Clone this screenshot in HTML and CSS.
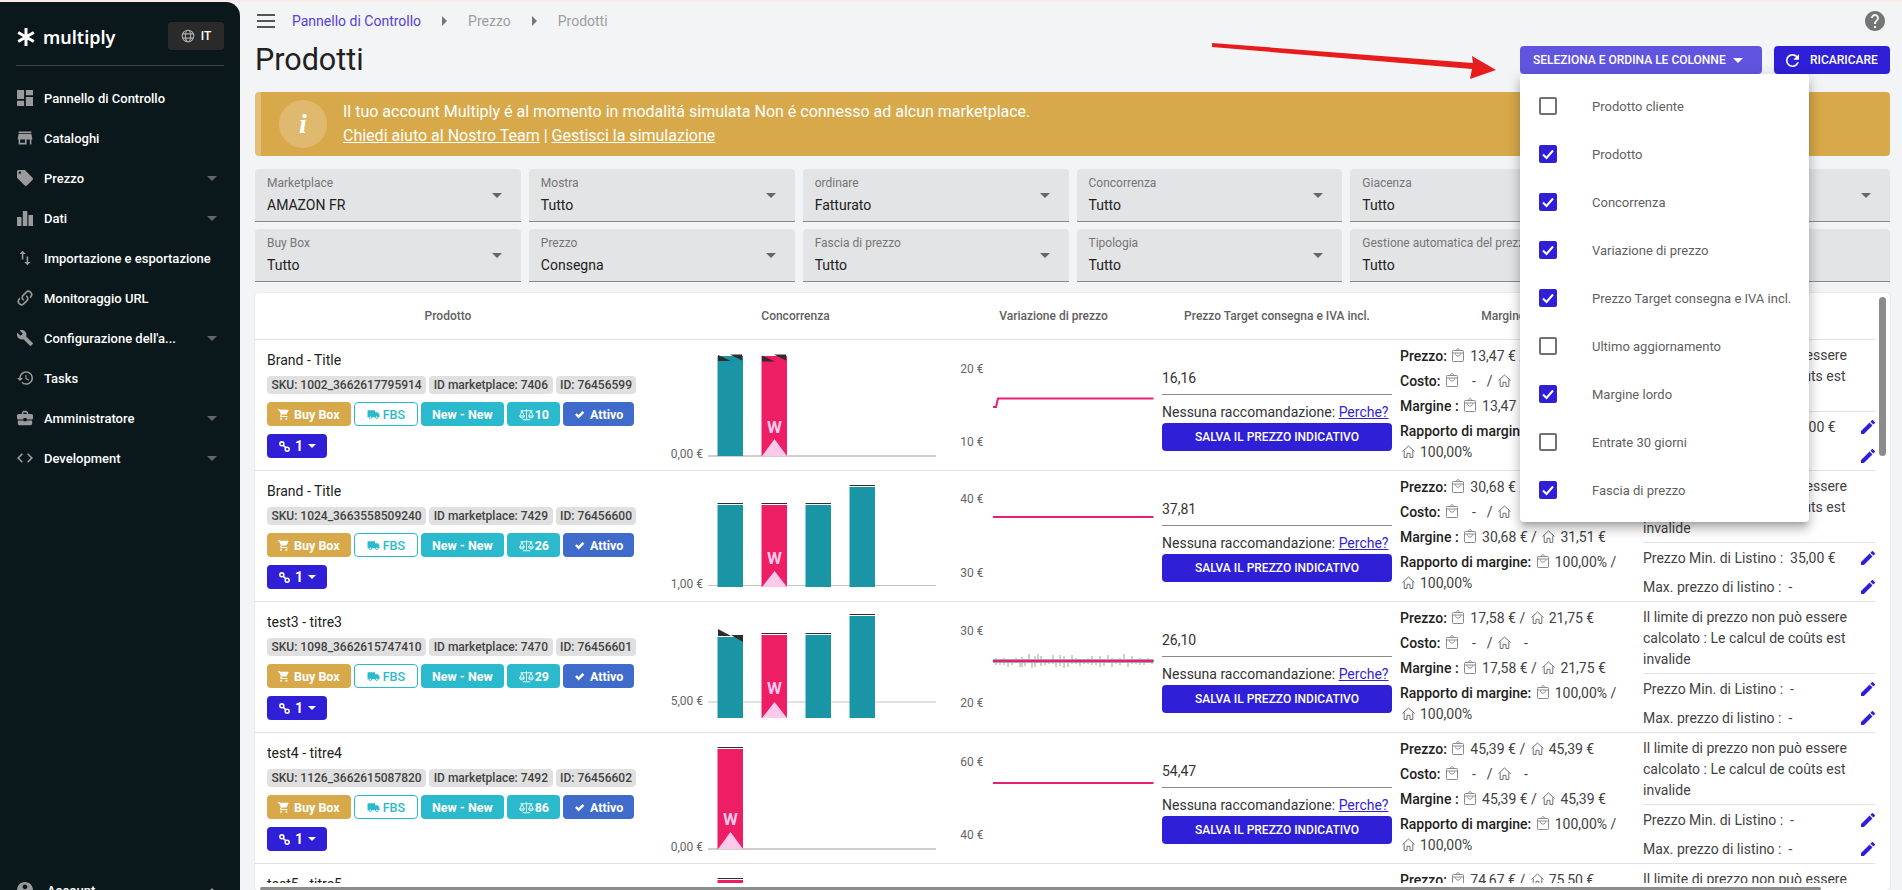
FILE: index.html
```html
<!DOCTYPE html>
<html lang="it">
<head>
<meta charset="utf-8">
<title>Prodotti</title>
<link rel="stylesheet" href="styles.css">
</head>
<body>
<svg class="sprite" xmlns="http://www.w3.org/2000/svg">
  <symbol id="i-dash" viewBox="3 3 18 18"><path d="M3 13h8V3H3v10zm0 8h8v-6H3v6zm10 0h8V11h-8v10zm0-18v6h8V3h-8z"/></symbol>
  <symbol id="i-store" viewBox="2 2 20 20"><path d="M20 4H4v2h16V4zm1 10v-2l-1-5H4l-1 5v2h1v6h10v-6h4v6h2v-6h1zm-9 4H6v-4h6v4z"/></symbol>
  <symbol id="i-tag" viewBox="2 2 20 20"><path d="M21.41 11.58l-9-9C12.05 2.22 11.55 2 11 2H4c-1.1 0-2 .9-2 2v7c0 .55.22 1.05.59 1.42l9 9c.36.36.86.58 1.41.58.55 0 1.05-.22 1.41-.59l7-7c.37-.36.59-.86.59-1.41 0-.55-.23-1.06-.59-1.42zM5.5 7C4.67 7 4 6.33 4 5.5S4.67 4 5.5 4 7 4.67 7 5.500 6.33 7 5.500 7z"/></symbol>
  <symbol id="i-bars" viewBox="0 0 16 16"><path d="M0 7h4.500v9H0zM5.800 1h4.500v15H5.800zM11.500 5H16v11h-4.500z"/></symbol>
  <symbol id="i-swap" viewBox="3 2 18 20"><path d="M9 3L5 6.990h3V14h2V6.990h3L9 3zm7 14.010V10h-2v7.010h-3L15 21l4-3.990h-3z"/></symbol>
  <symbol id="i-link" viewBox="2 2 20 20"><path d="M10.59 13.41c.41.39.41 1.03 0 1.42-.39.39-1.03.39-1.42 0a5.003 5.003 0 0 1 0-7.07l3.54-3.54a5.003 5.003 0 0 1 7.07 0 5.003 5.003 0 0 1 0 7.07l-1.49 1.49c.01-.82-.12-1.64-.4-2.42l.47-.48a2.982 2.982 0 0 0 0-4.24 2.982 2.982 0 0 0-4.24 0l-3.53 3.53a2.982 2.982 0 0 0 0 4.24zm2.82-4.24c.39-.39 1.03-.39 1.42 0a5.003 5.003 0 0 1 0 7.07l-3.54 3.54a5.003 5.003 0 0 1-7.07 0 5.003 5.003 0 0 1 0-7.07l1.49-1.49c-.01.82.12 1.64.4 2.43l-.47.47a2.982 2.982 0 0 0 0 4.24 2.982 2.982 0 0 0 4.24 0l3.53-3.53a2.982 2.982 0 0 0 0-4.24.973.973 0 0 1 0-1.42z"/></symbol>
  <symbol id="i-wrench" viewBox="1 1 22 22"><path d="M22.7 19l-9.1-9.1c.9-2.3.4-5-1.5-6.9-2-2-5-2.4-7.4-1.3L9 6 6 9 1.6 4.7C.4 7.1.9 10.1 2.9 12.1c1.9 1.9 4.6 2.4 6.9 1.5l9.1 9.1c.4.4 1 .4 1.4 0l2.3-2.3c.5-.4.5-1.1.1-1.4z"/></symbol>
  <symbol id="i-history" viewBox="1 2 21 20"><path d="M13 3c-4.97 0-9 4.03-9 9H1l3.89 3.89.07.14L9 12H6c0-3.87 3.13-7 7-7s7 3.13 7 7-3.13 7-7 7c-1.93 0-3.68-.79-4.94-2.06l-1.42 1.42C8.27 19.99 10.51 21 13 21c4.97 0 9-4.03 9-9s-4.03-9-9-9zm-1 5v5l4.28 2.54.72-1.21-3.5-2.08V8H12z"/></symbol>
  <symbol id="i-case" viewBox="2 2 20 20"><path d="M10 16v-1H3.01L3 19c0 1.11.89 2 2 2h14c1.11 0 2-.89 2-2v-4h-7v1h-4zm10-9h-4.01V5l-2-2h-4l-2 2v2H4c-1.1 0-2 .9-2 2v3c0 1.11.89 2 2 2h6v-2h4v2h6c1.1 0 2-.9 2-2V9c0-1.1-.9-2-2-2zm-6 0h-4V5h4v2z"/></symbol>
  <symbol id="i-code" viewBox="2 2 20 20"><path d="M9.4 16.6L4.8 12l4.6-4.6L8 6l-6 6 6 6 1.4-1.4zm5.2 0l4.6-4.6-4.6-4.6L16 6l6 6-6 6-1.4-1.4z"/></symbol>
  <symbol id="i-user" viewBox="2 2 20 20"><path d="M12 2C6.48 2 2 6.48 2 12s4.48 10 10 10 10-4.48 10-10S17.52 2 12 2zm0 3c1.66 0 3 1.34 3 3s-1.34 3-3 3-3-1.34-3-3 1.34-3 3-3zm0 14.2c-2.5 0-4.71-1.28-6-3.22.03-1.99 4-3.08 6-3.08 1.99 0 5.97 1.09 6 3.08-1.29 1.94-3.5 3.22-6 3.22z"/></symbol>
  <symbol id="i-help" viewBox="2 2 20 20"><path d="M12 2C6.48 2 2 6.48 2 12s4.48 10 10 10 10-4.48 10-10S17.52 2 12 2zm1 17h-2v-2h2v2zm2.07-7.75l-.9.92C13.45 12.9 13 13.5 13 15h-2v-.5c0-1.1.45-2.1 1.17-2.83l1.24-1.26c.37-.36.59-.86.59-1.41 0-1.1-.9-2-2-2s-2 .9-2 2H8c0-2.21 1.79-4 4-4s4 1.79 4 4c0 .88-.36 1.68-.93 2.25z"/></symbol>
  <symbol id="i-refresh" viewBox="4 4 16 16"><path d="M17.65 6.35C16.2 4.9 14.21 4 12 4c-4.42 0-7.99 3.58-7.99 8s3.57 8 7.99 8c3.73 0 6.84-2.55 7.73-6h-2.08c-.82 2.33-3.04 4-5.65 4-3.31 0-6-2.69-6-6s2.69-6 6-6c1.66 0 3.14.69 4.22 1.78L13 11h7V4l-2.35 2.35z"/></symbol>
  <symbol id="i-edit" viewBox="3 3 18 18"><path d="M3 17.25V21h3.75L17.81 9.94l-3.75-3.75L3 17.25zM20.71 7.04c.39-.39.39-1.02 0-1.41l-2.34-2.34c-.39-.39-1.02-.39-1.41 0l-1.83 1.83 3.75 3.75 1.83-1.83z"/></symbol>
  <symbol id="i-globe" viewBox="0 0 16 16"><g fill="none" stroke="currentColor" stroke-width="1.3"><circle cx="8" cy="8" r="6.6"/><ellipse cx="8" cy="8" rx="3" ry="6.6"/><path d="M1.6 5.6h12.8M1.6 10.4h12.8"/></g></symbol>
  <symbol id="i-cart" viewBox="1 2 21 20"><path d="M7 18c-1.1 0-1.99.9-1.99 2S5.9 22 7 22s2-.9 2-2-.9-2-2-2zM1 2v2h2l3.6 7.59-1.35 2.45c-.16.28-.25.61-.25.96 0 1.1.9 2 2 2h12v-2H7.42l.9-3h7.45c.75 0 1.41-.41 1.75-1.03l3.58-6.49c.08-.14.12-.31.12-.48 0-.55-.45-1-1-1H5.21l-.94-2H1zM17 18c-1.1 0-1.99.9-1.99 2s.89 2 1.99 2 2-.9 2-2-.9-2-2-2z"/></symbol>
  <symbol id="i-truck" viewBox="0 3 24 18"><path d="M9 4h13a1 1 0 0 1 1 1v12h-2a3 3 0 0 1-6 0H9a3 3 0 0 1-6 0H1v-5l3-4h5zM6 15.5a1.5 1.5 0 1 0 0 3 1.5 1.5 0 0 0 0-3zm12 0a1.5 1.5 0 1 0 0 3 1.5 1.5 0 0 0 0-3z"/></symbol>
  <symbol id="i-scale" viewBox="0 0 20 16"><g fill="none" stroke="currentColor" stroke-width="1.2"><path d="M10 1v13M2 3h16M5 15h10"/><path d="M4 3.5 1 10h6zM16 3.5 13 10h6z"/><path d="M1 10a3 2.6 0 0 0 6 0M13 10a3 2.6 0 0 0 6 0"/></g></symbol>
  <symbol id="i-check" viewBox="0 0 16 16"><path d="M1.5 8.5 4 6l2.7 2.7L12.3 3 15 5.6l-8.300 8.200z"/></symbol>
  <symbol id="i-tick" viewBox="0 0 14 14"><path d="M2 7.500 5.500 11 12 3.500" fill="none" stroke="#fff" stroke-width="2"/></symbol>
  <symbol id="i-chain" viewBox="0 0 14 14"><g fill="none" stroke="currentColor" stroke-width="2"><circle cx="3.600" cy="3.600" r="2.500"/><circle cx="10.400" cy="10.400" r="2.500"/><path d="M5.500 5.500l3 3"/></g></symbol>
  <symbol id="i-bag" viewBox="0 0 12 14"><g fill="none" stroke="currentColor" stroke-width="1"><rect x=".5" y="2.500" width="11" height="11" rx=".8"/><path d="M.5 5h11M3.500 5.500c0 3.500 5 3.500 5 0M4.500 2.500c0-2.500 3-2.500 3 0"/></g></symbol>
  <symbol id="i-home" viewBox="0 0 13 13"><g fill="none" stroke="currentColor" stroke-width="1"><path d="M.5 6.500 6.500 1l6 5.500"/><path d="M2.200 5.500v7h2.800V8.300h3v4.200h2.800v-7"/></g></symbol>
</svg>

<div class="app">
  <aside class="sidebar">
    <div class="brand">
      <svg class="brand-star" viewBox="0 0 18 18"><path d="M9 0v18M1.200 4.500l15.600 9M1.200 13.500l15.600-9"/></svg>
      <span class="brand-name">multiply</span>
      <span class="lang"><svg class="ic-globe"><use href="#i-globe"/></svg>IT</span>
    </div>
    <nav class="nav">
      <a class="nav-item"><svg class="nav-ic"><use href="#i-dash"/></svg><span>Pannello di Controllo</span></a>
      <a class="nav-item"><svg class="nav-ic"><use href="#i-store"/></svg><span>Cataloghi</span></a>
      <a class="nav-item"><svg class="nav-ic"><use href="#i-tag"/></svg><span>Prezzo</span><i class="caret nav-caret"></i></a>
      <a class="nav-item"><svg class="nav-ic"><use href="#i-bars"/></svg><span>Dati</span><i class="caret nav-caret"></i></a>
      <a class="nav-item"><svg class="nav-ic"><use href="#i-swap"/></svg><span>Importazione e esportazione</span></a>
      <a class="nav-item"><svg class="nav-ic"><use href="#i-link"/></svg><span>Monitoraggio URL</span></a>
      <a class="nav-item"><svg class="nav-ic"><use href="#i-wrench"/></svg><span>Configurazione dell'a...</span><i class="caret nav-caret"></i></a>
      <a class="nav-item"><svg class="nav-ic"><use href="#i-history"/></svg><span>Tasks</span></a>
      <a class="nav-item"><svg class="nav-ic"><use href="#i-case"/></svg><span>Amministratore</span><i class="caret nav-caret"></i></a>
      <a class="nav-item"><svg class="nav-ic"><use href="#i-code"/></svg><span>Development</span><i class="caret nav-caret"></i></a>
    </nav>
    <a class="nav-item account"><svg class="nav-ic"><use href="#i-user"/></svg><span>Account</span><i class="caret caret-up nav-caret"></i></a>
  </aside>

  <main class="main">
    <header class="topbar">
      <span class="burger"><i></i><i></i><i></i></span>
      <a class="crumb crumb-link">Pannello di Controllo</a>
      <i class="crumb-sep"></i>
      <span class="crumb">Prezzo</span>
      <i class="crumb-sep"></i>
      <span class="crumb">Prodotti</span>
      <svg class="help"><use href="#i-help"/></svg>
    </header>

    <div class="titlebar">
      <h1 class="title">Prodotti</h1>
      <div class="actions">
        <div class="menu-anchor">
          <button class="btn btn-light">SELEZIONA E ORDINA LE COLONNE<i class="caret caret-white"></i></button>
          <ul class="menu">
            <li class="menu-item"><i class="cb"></i>Prodotto cliente</li>
            <li class="menu-item"><i class="cb cb-on"><svg><use href="#i-tick"/></svg></i>Prodotto</li>
            <li class="menu-item"><i class="cb cb-on"><svg><use href="#i-tick"/></svg></i>Concorrenza</li>
            <li class="menu-item"><i class="cb cb-on"><svg><use href="#i-tick"/></svg></i>Variazione di prezzo</li>
            <li class="menu-item"><i class="cb cb-on"><svg><use href="#i-tick"/></svg></i>Prezzo Target consegna e IVA incl.</li>
            <li class="menu-item"><i class="cb"></i>Ultimo aggiornamento</li>
            <li class="menu-item"><i class="cb cb-on"><svg><use href="#i-tick"/></svg></i>Margine lordo</li>
            <li class="menu-item"><i class="cb"></i>Entrate 30 giorni</li>
            <li class="menu-item"><i class="cb cb-on"><svg><use href="#i-tick"/></svg></i>Fascia di prezzo</li>
          </ul>
        </div>
        <button class="btn btn-dark"><svg class="ic-refresh"><use href="#i-refresh"/></svg>RICARICARE</button>
      </div>
      <svg class="red-arrow" viewBox="0 0 300 40"><path d="M0 2 261 22 260 15 284 29 258 38 260 28 0 6z"/></svg>
    </div>

    <section class="banner">
      <span class="banner-circle">i</span>
      <div class="banner-text">
        <div>Il tuo account Multiply é al momento in modalitá simulata Non é connesso ad alcun marketplace.</div>
        <div><a class="banner-link">Chiedi aiuto al Nostro Team</a> | <a class="banner-link">Gestisci la simulazione</a></div>
      </div>
    </section>

    <section class="filters">
      <div class="filter"><label>Marketplace</label><span>AMAZON FR</span><i class="caret filter-caret"></i></div>
      <div class="filter"><label>Mostra</label><span>Tutto</span><i class="caret filter-caret"></i></div>
      <div class="filter"><label>ordinare</label><span>Fatturato</span><i class="caret filter-caret"></i></div>
      <div class="filter"><label>Concorrenza</label><span>Tutto</span><i class="caret filter-caret"></i></div>
      <div class="filter"><label>Giacenza</label><span>Tutto</span><i class="caret filter-caret"></i></div>
      <div class="filter"><i class="caret filter-caret"></i></div>
      <div class="filter"><label>Buy Box</label><span>Tutto</span><i class="caret filter-caret"></i></div>
      <div class="filter"><label>Prezzo</label><span>Consegna</span><i class="caret filter-caret"></i></div>
      <div class="filter"><label>Fascia di prezzo</label><span>Tutto</span><i class="caret filter-caret"></i></div>
      <div class="filter"><label>Tipologia</label><span>Tutto</span><i class="caret filter-caret"></i></div>
      <div class="filter"><label>Gestione automatica del prezzo</label><span>Tutto</span><i class="caret filter-caret"></i></div>
      <div class="filter"></div>
    </section>

    <section class="card">
      <div class="table">
        <div class="row head">
          <div>Prodotto</div><div>Concorrenza</div><div>Variazione di prezzo</div><div>Prezzo Target consegna e IVA incl.</div><div>Margine lordo</div><div></div>
        </div>

        <!-- riga 1 -->
        <div class="row">
          <div class="c-product">
            <div class="p-title">Brand - Title</div>
            <div class="tags"><span class="tag">SKU: 1002_3662617795914</span><span class="tag">ID marketplace: 7406</span><span class="tag">ID: 76456599</span></div>
            <div class="badges">
              <span class="badge b-gold"><svg><use href="#i-cart"/></svg>Buy Box</span>
              <span class="badge b-line"><svg><use href="#i-truck"/></svg>FBS</span>
              <span class="badge b-teal">New - New</span>
              <span class="badge b-teal b-scale"><svg><use href="#i-scale"/></svg>10</span>
              <span class="badge b-blue"><svg><use href="#i-check"/></svg>Attivo</span>
            </div>
            <span class="badge b-ink"><svg><use href="#i-chain"/></svg>1<i class="caret caret-white caret-small"></i></span>
          </div>
          <svg class="chart" viewBox="0 0 309 130">
            <text class="axis-t" x="62" y="118">0,00 €</text>
            <rect class="axis" x="67" y="115" width="228" height="2"/>
            <rect class="teal" x="76.500" y="16" width="25.500" height="100"/>
            <path class="dark" d="M77 15v6h13zM89 14.500h12v6z"/>
            <rect class="pink" x="120.500" y="16" width="25.500" height="100"/>
            <path class="dark" d="M121 15.500v6h13zM133 14.500h12v6z"/>
            <text class="w" x="133.500" y="93">W</text>
            <path class="tri" d="M133.500 99 121 116h25z"/>
          </svg>
          <svg class="spark" viewBox="0 0 207 130">
            <text class="axis-t" x="33.500" y="33">20 €</text>
            <text class="axis-t" x="33.500" y="106">10 €</text>
            <path class="line" d="M43 67h3l2-8.500h155.500"/>
          </svg>
          <div class="c-target">
            <div class="t-value">16,16</div>
            <div class="t-note">Nessuna raccomandazione: <a class="perche">Perche?</a></div>
            <button class="save">SALVA IL PREZZO INDICATIVO</button>
          </div>
          <div class="c-margin">
            <div class="m"><b>Prezzo:</b> <span class="v"><svg class="bag"><use href="#i-bag"/></svg>13,47 € /</span> <span class="v"><svg class="home"><use href="#i-home"/></svg>13,47 €</span></div>
            <div class="m"><b>Costo:</b> <span class="v"><svg class="bag"><use href="#i-bag"/></svg><span class="dash">-</span>/</span> <span class="v"><svg class="home"><use href="#i-home"/></svg><span class="dash">-</span></span></div>
            <div class="m"><b>Margine :</b> <span class="v"><svg class="bag"><use href="#i-bag"/></svg>13,47 € /</span> <span class="v"><svg class="home"><use href="#i-home"/></svg>13,47 €</span></div>
            <div class="m"><b>Rapporto di margine:</b> <span class="v"><svg class="bag"><use href="#i-bag"/></svg>100,00% /</span> <span class="v"><svg class="home"><use href="#i-home"/></svg>100,00%</span></div>
          </div>
          <div class="c-limit">
            <div class="l-text">Il limite di prezzo non può essere calcolato : Le calcul de coûts est invalide</div>
            <div class="l-line"><span>Prezzo Min. di Listino :&nbsp; 13,00 €</span><svg class="pen"><use href="#i-edit"/></svg></div>
            <div class="l-line"><span>Max. prezzo di listino :&nbsp; -</span><svg class="pen"><use href="#i-edit"/></svg></div>
          </div>
        </div>

        <!-- riga 2 -->
        <div class="row">
          <div class="c-product">
            <div class="p-title">Brand - Title</div>
            <div class="tags"><span class="tag">SKU: 1024_3663558509240</span><span class="tag">ID marketplace: 7429</span><span class="tag">ID: 76456600</span></div>
            <div class="badges">
              <span class="badge b-gold"><svg><use href="#i-cart"/></svg>Buy Box</span>
              <span class="badge b-line"><svg><use href="#i-truck"/></svg>FBS</span>
              <span class="badge b-teal">New - New</span>
              <span class="badge b-teal b-scale"><svg><use href="#i-scale"/></svg>26</span>
              <span class="badge b-blue"><svg><use href="#i-check"/></svg>Attivo</span>
            </div>
            <span class="badge b-ink"><svg><use href="#i-chain"/></svg>1<i class="caret caret-white caret-small"></i></span>
          </div>
          <svg class="chart" viewBox="0 0 309 130">
            <text class="axis-t" x="62" y="117">1,00 €</text>
            <rect class="axis-thin" x="67" y="114" width="228" height="1"/>
            <rect class="teal" x="76.500" y="34" width="25.500" height="82"/>
            <rect class="dark" x="76.500" y="32" width="25.500" height="1"/>
            <rect class="pink" x="120.500" y="34" width="25.500" height="82"/>
            <rect class="dark" x="120.500" y="32" width="25.500" height="1"/>
            <rect class="teal" x="164.500" y="34" width="25.500" height="82"/>
            <rect class="dark" x="164.500" y="32" width="25.500" height="1"/>
            <rect class="teal" x="208.500" y="16" width="25.500" height="100"/>
            <rect class="dark" x="208.500" y="14" width="25.500" height="1"/>
            <text class="w" x="133.500" y="93">W</text>
            <path class="tri" d="M133.500 100 121 116h25z"/>
          </svg>
          <svg class="spark" viewBox="0 0 207 130">
            <text class="axis-t" x="33.500" y="32">40 €</text>
            <text class="axis-t" x="33.500" y="106">30 €</text>
            <path class="line" d="M43 46h160.500"/>
          </svg>
          <div class="c-target">
            <div class="t-value">37,81</div>
            <div class="t-note">Nessuna raccomandazione: <a class="perche">Perche?</a></div>
            <button class="save">SALVA IL PREZZO INDICATIVO</button>
          </div>
          <div class="c-margin">
            <div class="m"><b>Prezzo:</b> <span class="v"><svg class="bag"><use href="#i-bag"/></svg>30,68 € /</span> <span class="v"><svg class="home"><use href="#i-home"/></svg>31,51 €</span></div>
            <div class="m"><b>Costo:</b> <span class="v"><svg class="bag"><use href="#i-bag"/></svg><span class="dash">-</span>/</span> <span class="v"><svg class="home"><use href="#i-home"/></svg><span class="dash">-</span></span></div>
            <div class="m"><b>Margine :</b> <span class="v"><svg class="bag"><use href="#i-bag"/></svg>30,68 € /</span> <span class="v"><svg class="home"><use href="#i-home"/></svg>31,51 €</span></div>
            <div class="m"><b>Rapporto di margine:</b> <span class="v"><svg class="bag"><use href="#i-bag"/></svg>100,00% /</span> <span class="v"><svg class="home"><use href="#i-home"/></svg>100,00%</span></div>
          </div>
          <div class="c-limit">
            <div class="l-text">Il limite di prezzo non può essere calcolato : Le calcul de coûts est invalide</div>
            <div class="l-line"><span>Prezzo Min. di Listino :&nbsp; 35,00 €</span><svg class="pen"><use href="#i-edit"/></svg></div>
            <div class="l-line"><span>Max. prezzo di listino :&nbsp; -</span><svg class="pen"><use href="#i-edit"/></svg></div>
          </div>
        </div>

        <!-- riga 3 -->
        <div class="row">
          <div class="c-product">
            <div class="p-title">test3 - titre3</div>
            <div class="tags"><span class="tag">SKU: 1098_3662615747410</span><span class="tag">ID marketplace: 7470</span><span class="tag">ID: 76456601</span></div>
            <div class="badges">
              <span class="badge b-gold"><svg><use href="#i-cart"/></svg>Buy Box</span>
              <span class="badge b-line"><svg><use href="#i-truck"/></svg>FBS</span>
              <span class="badge b-teal">New - New</span>
              <span class="badge b-teal b-scale"><svg><use href="#i-scale"/></svg>29</span>
              <span class="badge b-blue"><svg><use href="#i-check"/></svg>Attivo</span>
            </div>
            <span class="badge b-ink"><svg><use href="#i-chain"/></svg>1<i class="caret caret-white caret-small"></i></span>
          </div>
          <svg class="chart" viewBox="0 0 309 130">
            <text class="axis-t" x="62" y="103">5,00 €</text>
            <rect class="axis-thin" x="67" y="99.500" width="228" height="1"/>
            <rect class="teal" x="76.500" y="35" width="25.500" height="81"/>
            <path class="dark" d="M77 27v7h13zM90 33h12v7z"/>
            <rect class="pink" x="120.500" y="33" width="25.500" height="83"/>
            <rect class="dark" x="120.500" y="31" width="25.500" height="1"/>
            <rect class="teal" x="164.500" y="33" width="25.500" height="83"/>
            <rect class="dark" x="164.500" y="31" width="25.500" height="1"/>
            <rect class="teal" x="208.500" y="14" width="25.500" height="102"/>
            <rect class="dark" x="208.500" y="12" width="25.500" height="1"/>
            <text class="w" x="133.500" y="92">W</text>
            <path class="tri" d="M133.500 100 121 116h25z"/>
          </svg>
          <svg class="spark" viewBox="0 0 207 130">
            <text class="axis-t" x="33.500" y="33">30 €</text>
            <text class="axis-t" x="33.500" y="105">20 €</text>
            <rect class="band" x="43" y="57" width="160.500" height="4"/>
            <path class="noise" d="M46 56v7M50 57v6M54 56v7M58 57v8M62 57v6M66 56v5M70 57v8M72 55v10M75 57v7M79 52v8M82 57v9M85 54v11M88 52v9M91 54v10M95 57v6M99 57v5M103 53v9M106 57v8M110 53v11M114 54v12M118 57v8M122 53v9M126 56v6M130 57v7M134 57v5M138 56v6M142 54v9M146 57v6M150 54v11M154 57v7M158 53v7M162 56v9M166 57v5M170 56v7M174 52v8M178 57v8M182 54v8M186 57v5M190 56v7M194 57v6M198 56v5M202 57v5"/>
            <path class="line" d="M43 59h160.500"/>
          </svg>
          <div class="c-target">
            <div class="t-value">26,10</div>
            <div class="t-note">Nessuna raccomandazione: <a class="perche">Perche?</a></div>
            <button class="save">SALVA IL PREZZO INDICATIVO</button>
          </div>
          <div class="c-margin">
            <div class="m"><b>Prezzo:</b> <span class="v"><svg class="bag"><use href="#i-bag"/></svg>17,58 € /</span> <span class="v"><svg class="home"><use href="#i-home"/></svg>21,75 €</span></div>
            <div class="m"><b>Costo:</b> <span class="v"><svg class="bag"><use href="#i-bag"/></svg><span class="dash">-</span>/</span> <span class="v"><svg class="home"><use href="#i-home"/></svg><span class="dash">-</span></span></div>
            <div class="m"><b>Margine :</b> <span class="v"><svg class="bag"><use href="#i-bag"/></svg>17,58 € /</span> <span class="v"><svg class="home"><use href="#i-home"/></svg>21,75 €</span></div>
            <div class="m"><b>Rapporto di margine:</b> <span class="v"><svg class="bag"><use href="#i-bag"/></svg>100,00% /</span> <span class="v"><svg class="home"><use href="#i-home"/></svg>100,00%</span></div>
          </div>
          <div class="c-limit">
            <div class="l-text">Il limite di prezzo non può essere calcolato : Le calcul de coûts est invalide</div>
            <div class="l-line"><span>Prezzo Min. di Listino :&nbsp; -</span><svg class="pen"><use href="#i-edit"/></svg></div>
            <div class="l-line"><span>Max. prezzo di listino :&nbsp; -</span><svg class="pen"><use href="#i-edit"/></svg></div>
          </div>
        </div>

        <!-- riga 4 -->
        <div class="row">
          <div class="c-product">
            <div class="p-title">test4 - titre4</div>
            <div class="tags"><span class="tag">SKU: 1126_3662615087820</span><span class="tag">ID marketplace: 7492</span><span class="tag">ID: 76456602</span></div>
            <div class="badges">
              <span class="badge b-gold"><svg><use href="#i-cart"/></svg>Buy Box</span>
              <span class="badge b-line"><svg><use href="#i-truck"/></svg>FBS</span>
              <span class="badge b-teal">New - New</span>
              <span class="badge b-teal b-scale"><svg><use href="#i-scale"/></svg>86</span>
              <span class="badge b-blue"><svg><use href="#i-check"/></svg>Attivo</span>
            </div>
            <span class="badge b-ink"><svg><use href="#i-chain"/></svg>1<i class="caret caret-white caret-small"></i></span>
          </div>
          <svg class="chart" viewBox="0 0 309 130">
            <text class="axis-t" x="62" y="118">0,00 €</text>
            <rect class="axis" x="67" y="115" width="228" height="2"/>
            <rect class="pink" x="76.500" y="16" width="25.500" height="100"/>
            <rect class="dark" x="76.500" y="14" width="25.500" height="1"/>
            <text class="w" x="89.500" y="92">W</text>
            <path class="tri" d="M89.500 99 77 116h25z"/>
          </svg>
          <svg class="spark" viewBox="0 0 207 130">
            <text class="axis-t" x="33.500" y="33">60 €</text>
            <text class="axis-t" x="33.500" y="106">40 €</text>
            <path class="line" d="M43 50h160.500"/>
          </svg>
          <div class="c-target">
            <div class="t-value">54,47</div>
            <div class="t-note">Nessuna raccomandazione: <a class="perche">Perche?</a></div>
            <button class="save">SALVA IL PREZZO INDICATIVO</button>
          </div>
          <div class="c-margin">
            <div class="m"><b>Prezzo:</b> <span class="v"><svg class="bag"><use href="#i-bag"/></svg>45,39 € /</span> <span class="v"><svg class="home"><use href="#i-home"/></svg>45,39 €</span></div>
            <div class="m"><b>Costo:</b> <span class="v"><svg class="bag"><use href="#i-bag"/></svg><span class="dash">-</span>/</span> <span class="v"><svg class="home"><use href="#i-home"/></svg><span class="dash">-</span></span></div>
            <div class="m"><b>Margine :</b> <span class="v"><svg class="bag"><use href="#i-bag"/></svg>45,39 € /</span> <span class="v"><svg class="home"><use href="#i-home"/></svg>45,39 €</span></div>
            <div class="m"><b>Rapporto di margine:</b> <span class="v"><svg class="bag"><use href="#i-bag"/></svg>100,00% /</span> <span class="v"><svg class="home"><use href="#i-home"/></svg>100,00%</span></div>
          </div>
          <div class="c-limit">
            <div class="l-text">Il limite di prezzo non può essere calcolato : Le calcul de coûts est invalide</div>
            <div class="l-line"><span>Prezzo Min. di Listino :&nbsp; -</span><svg class="pen"><use href="#i-edit"/></svg></div>
            <div class="l-line"><span>Max. prezzo di listino :&nbsp; -</span><svg class="pen"><use href="#i-edit"/></svg></div>
          </div>
        </div>

        <!-- riga 5, tagliata dal bordo -->
        <div class="row">
          <div class="c-product">
            <div class="p-title">test5 - titre5</div>
          </div>
          <svg class="chart" viewBox="0 0 309 130">
            <rect class="pink" x="76.500" y="16" width="25.500" height="100"/>
            <rect class="dark" x="76.500" y="14" width="25.500" height="1"/>
          </svg>
          <div></div>
          <div></div>
          <div class="c-margin">
            <div class="m"><b>Prezzo:</b> <span class="v"><svg class="bag"><use href="#i-bag"/></svg>74,67 € /</span> <span class="v"><svg class="home"><use href="#i-home"/></svg>75,50 €</span></div>
          </div>
          <div class="c-limit">
            <div class="l-text">Il limite di prezzo non può essere</div>
          </div>
        </div>
      </div>
      <i class="sb-v"></i>
      <i class="sb-h"></i>
    </section>
  </main>
</div>
</body>
</html>
```
FILE: styles.css
```css
* { box-sizing: border-box; }
html, body { margin: 0; height: 890px; overflow: hidden; }
body {
  font-family: Roboto, "Liberation Sans", sans-serif;
  font-size: 14px;
  color: #212121;
  background: #f3f4f6;
  border-top: 2px solid #fde9e9;
}
i { font-style: normal; display: block; }
a { color: inherit; }
.sprite { display: none; }

.app { display: flex; height: 888px; }

/* sidebar */
.sidebar {
  width: 240px;
  flex: none;
  display: flex;
  flex-direction: column;
  background: #0a171b;
  border-top-right-radius: 14px;
  overflow: hidden;
  color: #fff;
  padding: 0 16px;
}
.brand {
  height: 64px;
  flex: none;
  display: flex;
  align-items: center;
  padding-top: 6px;
  border-bottom: 1px solid #444;
  margin-bottom: 12px;
}
.brand-star { width: 18px; height: 18px; margin-left: 1px; fill: none; stroke: #fff; stroke-width: 3; }
.brand-name { font-family: "Noto Sans", sans-serif; font-weight: 600; font-size: 18px; margin-left: 8px; line-height: 1; }
.lang {
  margin-left: auto;
  width: 56px;
  height: 28px;
  align-self: flex-start;
  margin-top: 14px;
  background: #2a2a2a;
  border-radius: 4px;
  display: flex;
  align-items: center;
  justify-content: center;
  gap: 6px;
  font-size: 12px;
  font-weight: 500;
}
.ic-globe { width: 14px; height: 14px; color: #aaa; }
.nav { display: flex; flex-direction: column; }
.nav-item {
  height: 40px;
  flex: none;
  display: flex;
  align-items: center;
  font-size: 13px;
  font-weight: 500;
  color: #fff;
  position: relative;
}
.nav-ic { width: 16px; height: 16px; margin: 0 11px 0 1px; fill: #9a9a9a; flex: none; }
.nav-caret { margin-left: auto; margin-right: 7px; border-top-color: #8d8d8d; }
.account { margin-top: auto; margin-bottom: -20px; }
.account .nav-ic { margin-right: 14px; }

.caret { width: 0; height: 0; border-left: 5px solid transparent; border-right: 5px solid transparent; border-top: 5px solid #666; }
.caret-up { border-top: 0; border-bottom: 5px solid #8d8d8d; }
.caret-white { border-top-color: #fff; }
.caret-small { border-left-width: 4px; border-right-width: 4px; border-top-width: 4px; margin-left: 5px; }

/* main */
.main { flex: 1; min-width: 0; padding: 0 12px 0 15px; display: flex; flex-direction: column; }
.topbar { height: 38px; flex: none; display: flex; align-items: center; position: relative; }
.burger { width: 18px; margin: 0 17px 0 2px; display: flex; flex-direction: column; gap: 4px; }
.burger i { height: 2px; background: #555; }
.crumb { color: #9e9e9e; font-size: 14px; }
.crumb-link { color: #5340df; }
.crumb-sep { width: 0; height: 0; margin: 0 21px; border-top: 5px solid transparent; border-bottom: 5px solid transparent; border-left: 5px solid #777; }
.help { width: 20px; height: 20px; fill: #757575; margin-left: auto; margin-right: 5px; }

.titlebar { height: 28px; margin-top: 6px; flex: none; display: flex; align-items: center; justify-content: space-between; position: relative; z-index: 5; }
.title { margin: 0; font-size: 30.500px; font-weight: 400; line-height: 28px; color: #212121; }
.actions { display: flex; gap: 12px; }
.menu-anchor { position: relative; }
.btn {
  height: 28px;
  border: 0;
  border-radius: 4px;
  color: #fff;
  font-family: inherit;
  font-size: 12px;
  font-weight: 500;
  display: flex;
  align-items: center;
  white-space: nowrap;
  padding: 0;
}
.btn-light { width: 242px; background: #6155e0; padding-left: 13px; gap: 7px; }
.btn-dark { width: 116px; background: #2f1fd6; padding-left: 12px; gap: 11px; }
.ic-refresh { width: 13px; height: 13px; fill: #fff; }
.red-arrow { position: absolute; left: 957px; top: -5px; width: 300px; height: 40px; fill: #e71d1d; }

.menu {
  position: absolute;
  left: 0;
  top: 100%;
  width: 289px;
  margin: 0;
  padding: 8px 0;
  list-style: none;
  background: #fff;
  border-radius: 4px;
  box-shadow: 0 5px 5px -3px rgba(0,0,0,.2), 0 8px 10px 1px rgba(0,0,0,.14), 0 3px 14px 2px rgba(0,0,0,.12);
}
.menu-item { height: 48px; display: flex; align-items: center; padding-left: 19px; font-size: 13px; color: #5f5f5f; }
.cb { width: 18px; height: 18px; flex: none; margin-right: 35px; border: 2px solid #707070; border-radius: 2px; }
.cb-on { background: #2f1fd6; border-color: #2f1fd6; }
.cb-on svg { display: block; width: 14px; height: 14px; }

.banner {
  height: 64px;
  margin-top: 18px;
  flex: none;
  display: flex;
  align-items: center;
  background: #d8a94a;
  border-left: 6px solid #e3c07a;
  border-radius: 4px;
  color: #fff;
  padding-left: 18px;
}
.banner-circle {
  width: 48px;
  height: 48px;
  border-radius: 50%;
  background: rgba(255,255,255,.2);
  display: flex;
  align-items: center;
  justify-content: center;
  font-family: "Liberation Serif", serif;
  font-style: italic;
  font-weight: 700;
  font-size: 28px;
}
.banner-text { margin-left: 16px; font-size: 16px; line-height: 24px; }
.banner-link { text-decoration: underline; }

.filters { margin-top: 13px; flex: none; display: grid; grid-template-columns: repeat(6, 1fr); column-gap: 8px; row-gap: 7px; }
.filter {
  height: 53px;
  background: #e3e4e6;
  border-bottom: 1px solid #8a8a8a;
  border-radius: 4px 4px 0 0;
  padding: 6px 12px 0;
  position: relative;
  overflow: hidden;
}
.filter label { display: block; font-size: 12px; line-height: 16px; color: #757575; white-space: nowrap; }
.filter span { display: block; font-size: 14px; line-height: 20px; margin-top: 4px; color: #212121; }
.filter-caret { position: absolute; right: 19px; top: 24px; }

/* table */
.card { flex: 1; min-height: 0; margin-top: 11px; background: #fff; border-radius: 4px; position: relative; overflow: hidden; box-shadow: 0 0 2px rgba(0,0,0,.12); }
.table { height: 590px; overflow: hidden; width: 1620px; }
.row { display: grid; grid-template-columns: 386px 309px 207px 240px 243px 235px; height: 131px; border-bottom: 1px solid #e2e2e2; }
.row.head { height: 47px; font-size: 12px; font-weight: 500; color: #616161; text-align: center; align-items: center; }

.c-product { padding: 10px 0 0 12px; }
.p-title { line-height: 20px; margin-bottom: 6px; }
.tags { display: flex; gap: 3px; }
.tag { height: 18px; line-height: 18px; padding: 0 4.500px; background: #e0e0e0; border-radius: 4px; font-size: 12px; font-weight: 500; color: #424242; white-space: nowrap; }
.badges { display: flex; gap: 3px; margin: 8px 0; }
.badge {
  height: 24px;
  display: inline-flex;
  align-items: center;
  padding: 0 11px;
  border-radius: 4px;
  font-size: 12.500px;
  font-weight: 700;
  color: #fff;
  white-space: nowrap;
}
.badge svg { width: 11px; height: 11px; fill: currentColor; margin-right: 5px; flex: none; }
.b-gold { background: #d8a94a; }
.b-line { background: #fff; color: #2bbacd; border: 1px solid #2bbacd; font-weight: 500; padding: 0 12px; }
.b-line svg { width: 13px; height: 11px; margin-right: 3px; transform: scaleX(-1); }
.b-teal { background: #2bbacd; }
.b-scale { padding: 0 11px 0 12px; }
.b-scale svg { width: 15px; height: 13px; margin-right: 1px; }
.b-blue { background: #3f6ccb; }
.b-ink { background: #2f1fd6; font-size: 14px; padding: 0 11px 0 12px; }

.chart, .spark { display: block; width: 100%; height: 130px; }
.axis-t { font-size: 12px; fill: #666; text-anchor: end; }
.axis { fill: #cfcfcf; }
.axis-thin { fill: #c4c4c4; }
.teal { fill: #1a95a5; }
.pink { fill: #ed1e63; }
.dark { fill: #2d2d2d; }
.tri { fill: #fbc9ea; }
.w { font-size: 17px; font-weight: 700; fill: #fbc9ea; text-anchor: middle; }
.line { fill: none; stroke: #e91e78; stroke-width: 2; }
.band { fill: #a9a9a9; }
.noise { fill: none; stroke: #a0a0a0; stroke-width: 1; }

.c-target { padding: 28px 5px 0; }
.t-value { line-height: 20px; padding-bottom: 6px; height: 27px; border-bottom: 1px solid #8a8a8a; color: #333; }
.t-note { line-height: 20px; margin-top: 7px; color: #333; white-space: nowrap; }
.perche { color: #2f1fd6; text-decoration: underline; }
.save { display: block; width: 100%; height: 28px; margin-top: 1px; border: 0; border-radius: 4px; background: #2f1fd6; color: #fff; font-family: inherit; font-size: 12px; font-weight: 500; }

.c-margin { padding: 6px 0 0 3px; color: #424242; }
.m { line-height: 21px; margin-bottom: 4px; }
.m:last-child { margin-bottom: 0; }
.m b { font-weight: 500; color: #212121; }
.v { white-space: nowrap; }
.bag { width: 12px; height: 14px; color: #8a8a8a; margin: 0 6px 0 2px; vertical-align: -1px; }
.home { width: 13px; height: 13px; color: #6f6f6f; margin: 0 5px 0 2px; vertical-align: -1px; }
.dash { display: inline-block; padding: 0 11px 0 8px; }

.c-limit { padding: 5px 0 0 3px; color: #424242; }
.l-text { line-height: 21px; height: 67px; padding-bottom: 3px; border-bottom: 1px solid #e2e2e2; }
.l-line { display: flex; justify-content: space-between; align-items: center; height: 29px; }
.pen { width: 14px; height: 14px; fill: #2f1fd6; }

.sb-v { position: absolute; left: 1624px; top: 4px; width: 7px; height: 159px; border-radius: 4px; background: #8c8c8c; }
.sb-h { position: absolute; left: 5px; bottom: 0; width: 1561px; height: 3px; border-radius: 2px; background: #8c8c8c; }
```
